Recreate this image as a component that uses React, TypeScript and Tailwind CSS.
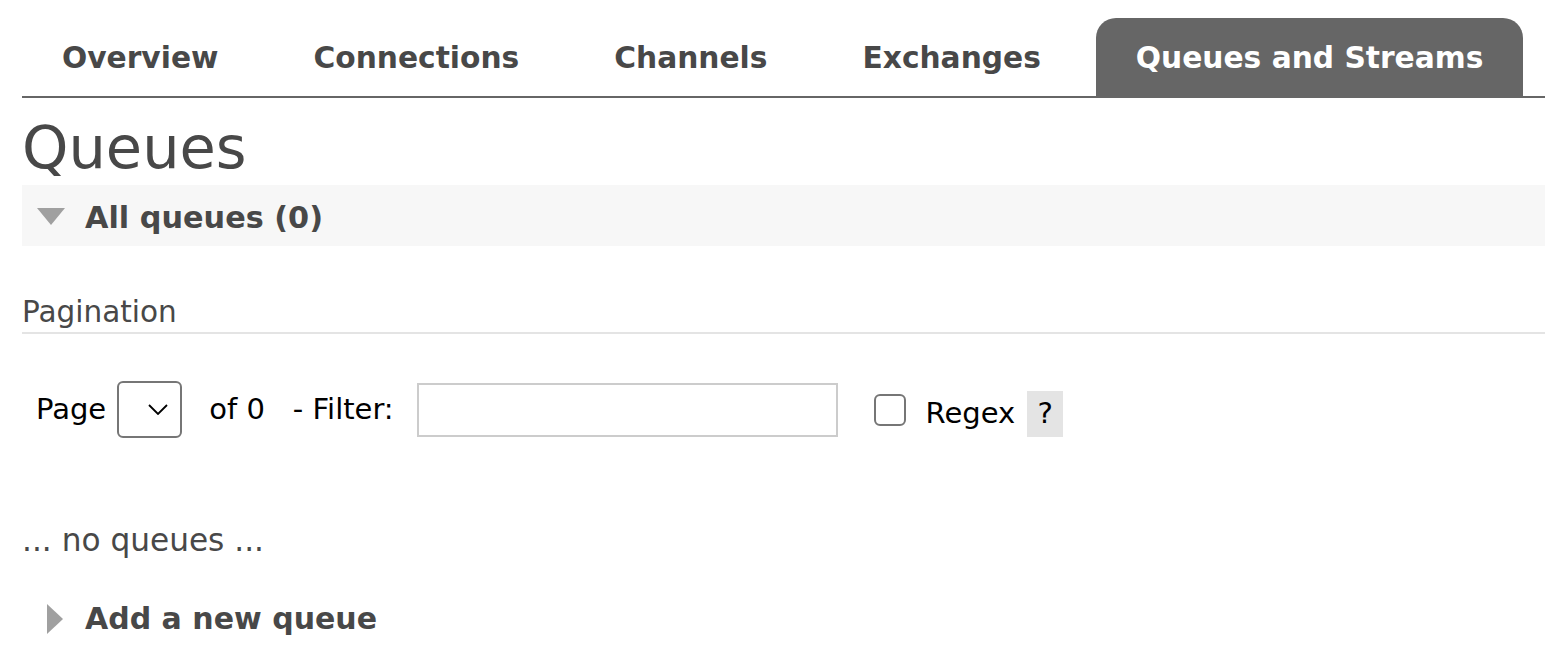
const tabs = ["Overview", "Connections", "Channels", "Exchanges", "Queues and Streams"];

function Tabs({ active }: { active: string }) {
  return (
    <ul className="flex mt-[18px] border-b-2 border-[#666]">
      {tabs.map((t) => (
        <li
          key={t}
          className={
            t === active
              ? "shrink-0 whitespace-nowrap flex items-center h-[78px] pt-[3px] px-[40px] mr-[15px] rounded-t-[20px] bg-[#666] text-white text-[29.7px] font-bold"
              : "shrink-0 whitespace-nowrap flex items-center h-[78px] pt-[3px] px-[40px] mr-[15px] text-[#484848] text-[29.7px] font-bold"
          }
        >
          {t}
        </li>
      ))}
    </ul>
  );
}

export default function App() {
  return (
    <div className="min-h-screen bg-white pl-[22px] font-['DejaVu_Sans',sans-serif] text-[#484848]">
      <Tabs active="Queues and Streams" />

      <h1 className="mt-[21px] text-[59px] leading-[58px] font-normal">Queues</h1>

      {/* all queues section */}
      <div className="mt-[8px] flex items-center h-[61px] bg-[#f7f7f7]">
        <svg width="28" height="17" viewBox="0 0 28 17" className="ml-[15px] mt-[2px]">
          <polygon points="0,0 28,0 14,17" fill="#a0a0a0" />
        </svg>
        <h2 className="ml-[20px] mt-[4px] text-[30.3px] font-bold">All queues (0)</h2>
      </div>

      <h3 className="mt-[48px] pb-[2px] text-[29.5px] leading-[36px] border-b-2 border-[#e4e4e4]">
        Pagination
      </h3>

      <div className="mt-[47px] flex items-center text-[29px] text-black">
        <span className="ml-[14px]">Page</span>
        <div className="ml-[11px] flex items-center justify-end pr-[12px] w-[65px] h-[57px] border-2 border-[#767676] rounded-[6px]">
          <svg width="20" height="11" viewBox="0 0 20 11">
            <polyline points="1,1 10,10 19,1" fill="none" stroke="#000" strokeWidth="1.8" />
          </svg>
        </div>
        <span className="ml-[27px]">of 0</span>
        <span className="ml-[28px]">- Filter:</span>
        <input
          type="text"
          className="ml-[23px] w-[421px] h-[54px] border-2 border-[#ccc] outline-none"
        />
        <input
          type="checkbox"
          className="ml-[36px] appearance-none w-[32px] h-[32px] border-2 border-[#767676] rounded-[6px] bg-white"
        />
        <div className="flex items-center pt-[9px]">
          <span className="ml-[20px]">Regex</span>
          <span className="ml-[12px] flex items-center justify-center w-[36px] h-[46px] bg-[#e4e4e4]">?</span>
        </div>
      </div>

      <p className="mt-[84px] text-[31.2px] leading-[36px]">... no queues ...</p>

      <div className="mt-[38px] flex items-center">
        <svg width="16" height="30" viewBox="0 0 16 30" className="ml-[25px]">
          <polygon points="0,0 16,15 0,30" fill="#a0a0a0" />
        </svg>
        <h2 className="ml-[22px] text-[30px] font-bold">Add a new queue</h2>
      </div>
    </div>
  );
}
